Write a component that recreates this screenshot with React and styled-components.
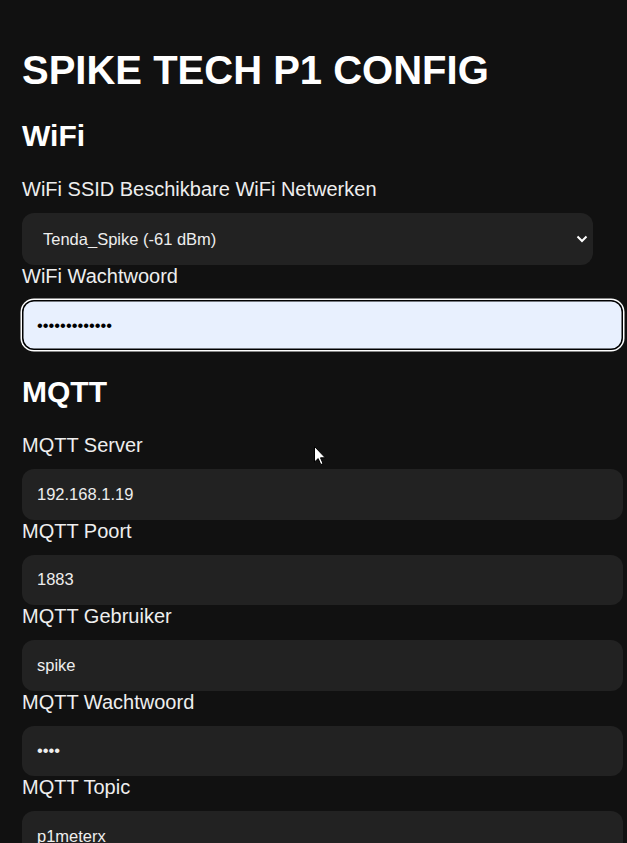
import React from "react";
import styled, { createGlobalStyle } from "styled-components";

const Global = createGlobalStyle`
  html, body {
    margin: 0;
    padding: 0;
    background: #111111;
    overflow: hidden;
  }
  body {
    font-family: "Liberation Sans", Arial, sans-serif;
    color: #eeeeee;
  }
  * { box-sizing: border-box; }
`;

const Page = styled.div`
  position: relative;
  padding: 47px 4px 40px 22px;
  min-height: 843px;
`;

const Title = styled.h1`
  margin: 0 0 26px;
  font-size: 40px;
  line-height: 46px;
  font-weight: 700;
  color: #ffffff;
`;

const SectionTitle = styled.h2`
  margin: 25px 0 25px;
  font-size: 30px;
  line-height: 34px;
  font-weight: 700;
  color: #ffffff;
`;

const Label = styled.label`
  display: block;
  margin: 0 0 13px;
  font-size: 20px;
  line-height: 22px;
  color: #eeeeee;
`;

const SelectWrap = styled.div`
  position: relative;
  width: calc(100% - 30px);
`;

const Select = styled.select`
  display: block;
  width: 100%;
  height: 52px;
  padding: 0 24px 0 21px;
  border: none;
  border-radius: 12px;
  background: #222222;
  color: #eeeeee;
  font-family: "Liberation Sans", Arial, sans-serif;
  font-size: 16.5px;
  appearance: none;
  -webkit-appearance: none;
  outline: none;
`;

const Chevron = styled.svg`
  position: absolute;
  right: 5px;
  top: 50%;
  margin-top: -4px;
  pointer-events: none;
`;

const Field = styled.input`
  display: block;
  width: 100%;
  height: 50.4px;
  padding: 0 15px;
  border: none;
  border-radius: 12px;
  background: ${(p) => (p.$focused ? "#e8f0fe" : "#222222")};
  color: ${(p) => (p.$focused ? "#000000" : "#eeeeee")};
  font-family: "Liberation Sans", Arial, sans-serif;
  font-size: 16.5px;
  outline: none;
  box-shadow: ${(p) =>
    p.$focused ? "inset 0 0 0 1.5px #000000, 0 0 0 1.5px #ffffff" : "none"};
`;

const Cursor = styled.svg`
  position: absolute;
  left: 314px;
  top: 446px;
  pointer-events: none;
`;

const FieldGroup = ({ label, children }) => (
  <>
    <Label>{label}</Label>
    {children}
  </>
);

export default function App() {
  return (
    <>
      <Global />
      <Page>
        <Title>SPIKE TECH P1 CONFIG</Title>

        <SectionTitle>WiFi</SectionTitle>
        <FieldGroup label="WiFi SSID Beschikbare WiFi Netwerken">
          <SelectWrap>
            <Select defaultValue="Tenda_Spike">
              <option value="Tenda_Spike">Tenda_Spike (-61 dBm)</option>
            </Select>
            <Chevron width="12" height="8" viewBox="0 0 12 8">
              <polyline
                points="1.5,1.5 6,6 10.5,1.5"
                fill="none"
                stroke="#ffffff"
                strokeWidth="2"
              />
            </Chevron>
          </SelectWrap>
        </FieldGroup>
        <FieldGroup label="WiFi Wachtwoord">
          <Field type="password" defaultValue="spiketech1234" $focused readOnly />
        </FieldGroup>

        <SectionTitle>MQTT</SectionTitle>
        <FieldGroup label="MQTT Server">
          <Field type="text" defaultValue="192.168.1.19" readOnly />
        </FieldGroup>
        <FieldGroup label="MQTT Poort">
          <Field type="text" defaultValue="1883" readOnly />
        </FieldGroup>
        <FieldGroup label="MQTT Gebruiker">
          <Field type="text" defaultValue="spike" readOnly />
        </FieldGroup>
        <FieldGroup label="MQTT Wachtwoord">
          <Field type="password" defaultValue="pass" readOnly />
        </FieldGroup>
        <FieldGroup label="MQTT Topic">
          <Field type="text" defaultValue="p1meterx" readOnly />
        </FieldGroup>

        <Cursor width="13" height="20" viewBox="0 0 13 20">
          <path
            d="M0.5 0.5 L0.5 16 L4.2 12.6 L6.8 18.6 L9 17.6 L6.5 11.8 L11.3 11.8 Z"
            fill="#ffffff"
            stroke="#000000"
            strokeWidth="1"
            strokeLinejoin="miter"
          />
        </Cursor>
      </Page>
    </>
  );
}
